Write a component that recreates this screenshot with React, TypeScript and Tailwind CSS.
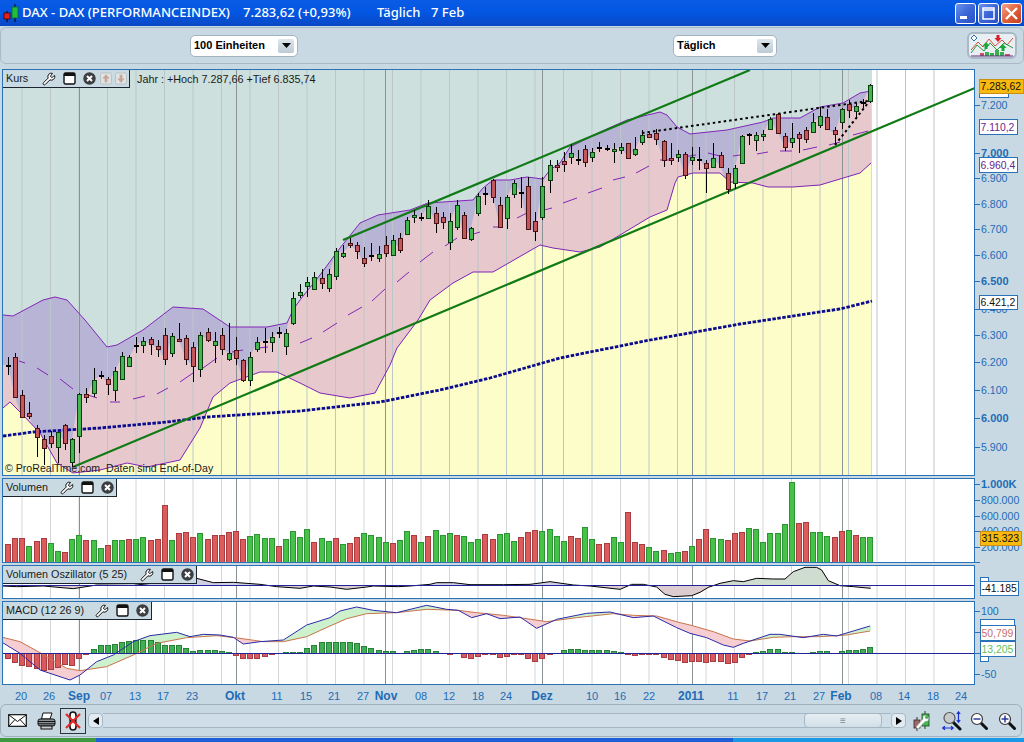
import { Wrench } from 'lucide-react';

type Pt = [number, number];
type Candle = [number, number, number, number, 'g' | 'r' | 'd'];

// high, low, body top, body bottom, kind (all in page pixels)
const candles: Candle[] = [
  [357, 375, 365, 366, 'd'], [353, 398, 357, 397, 'r'], [390, 418, 395, 417, 'r'], [402, 419, 413, 416, 'r'],
  [425, 457, 428, 437, 'r'], [435, 465, 439, 448, 'r'], [431, 448, 436, 443, 'r'], [432, 463, 432, 447, 'g'],
  [424, 450, 425, 443, 'r'], [438, 467, 439, 462, 'g'], [393, 453, 394, 436, 'g'], [388, 403, 394, 397, 'r'],
  [368, 397, 380, 393, 'g'], [371, 379, 375, 376, 'd'], [377, 395, 379, 384, 'r'], [367, 401, 371, 390, 'g'],
  [352, 380, 356, 379, 'g'], [355, 367, 357, 366, 'g'], [337, 353, 345, 346, 'd'], [337, 353, 341, 345, 'g'],
  [337, 355, 339, 344, 'r'], [340, 357, 346, 349, 'r'], [328, 365, 335, 359, 'r'], [333, 357, 336, 353, 'g'],
  [323, 342, 339, 341, 'r'], [335, 365, 338, 359, 'r'], [342, 382, 347, 366, 'r'], [332, 377, 335, 369, 'g'],
  [328, 342, 332, 340, 'r'], [332, 363, 341, 345, 'g'], [328, 355, 335, 349, 'r'], [323, 361, 353, 359, 'g'],
  [337, 365, 350, 358, 'r'], [359, 382, 360, 380, 'r'], [352, 386, 357, 380, 'g'], [337, 352, 342, 349, 'g'],
  [328, 353, 341, 342, 'd'], [332, 352, 337, 342, 'g'], [327, 338, 332, 333, 'd'], [329, 355, 333, 346, 'g'],
  [292, 325, 298, 323, 'g'], [284, 298, 292, 295, 'g'], [277, 297, 282, 286, 'g'], [272, 290, 277, 289, 'g'],
  [269, 289, 278, 283, 'r'], [269, 292, 274, 288, 'g'], [248, 280, 251, 276, 'g'], [245, 258, 253, 256, 'g'],
  [238, 248, 243, 245, 'r'], [242, 259, 245, 251, 'r'], [247, 267, 258, 263, 'r'], [243, 261, 255, 256, 'd'],
  [246, 262, 254, 258, 'g'], [236, 257, 245, 253, 'r'], [235, 256, 240, 255, 'g'], [233, 253, 238, 250, 'r'],
  [217, 235, 220, 234, 'g'], [210, 223, 215, 217, 'g'], [213, 221, 217, 218, 'd'], [200, 219, 206, 218, 'g'],
  [207, 233, 213, 223, 'r'], [212, 229, 217, 222, 'r'], [213, 250, 221, 242, 'g'], [200, 230, 205, 227, 'g'],
  [212, 238, 215, 238, 'r'], [227, 241, 228, 239, 'g'], [193, 216, 196, 213, 'g'], [187, 205, 193, 194, 'd'],
  [179, 203, 180, 197, 'r'], [197, 227, 205, 227, 'r'], [195, 229, 197, 218, 'g'], [180, 198, 183, 194, 'g'],
  [177, 208, 192, 193, 'd'], [177, 229, 186, 229, 'r'], [212, 241, 221, 231, 'r'], [177, 220, 186, 217, 'g'],
  [160, 193, 165, 180, 'g'], [160, 172, 165, 167, 'r'], [152, 172, 161, 164, 'r'], [144, 164, 153, 157, 'g'],
  [150, 165, 159, 160, 'd'], [145, 167, 149, 162, 'r'], [148, 162, 152, 157, 'g'], [142, 152, 147, 148, 'd'],
  [145, 151, 148, 149, 'd'], [143, 163, 149, 151, 'g'], [143, 154, 147, 150, 'g'], [143, 158, 143, 158, 'r'],
  [137, 156, 149, 154, 'g'], [130, 145, 135, 142, 'g'], [133, 138, 134, 137, 'r'], [129, 145, 133, 139, 'r'],
  [140, 167, 141, 160, 'r'], [143, 165, 158, 160, 'r'], [150, 162, 154, 157, 'g'], [152, 179, 154, 175, 'r'],
  [147, 165, 157, 160, 'g'], [147, 170, 159, 160, 'd'], [160, 193, 163, 168, 'r'], [143, 167, 158, 167, 'g'],
  [152, 168, 155, 167, 'r'], [168, 194, 173, 189, 'r'], [165, 189, 168, 183, 'g'], [135, 163, 136, 163, 'g'],
  [133, 145, 134, 135, 'd'], [132, 151, 135, 140, 'g'], [130, 141, 134, 136, 'g'], [117, 129, 119, 129, 'g'],
  [113, 133, 114, 133, 'r'], [133, 151, 136, 147, 'r'], [123, 148, 138, 142, 'g'], [132, 153, 134, 138, 'r'],
  [127, 143, 130, 139, 'r'], [113, 133, 122, 132, 'g'], [107, 128, 116, 125, 'g'], [109, 129, 117, 129, 'r'],
  [127, 144, 130, 134, 'r'], [108, 129, 109, 122, 'g'], [100, 118, 104, 110, 'r'], [103, 118, 106, 111, 'g'],
  [99, 108, 102, 103, 'd'], [84, 103, 85, 101, 'g'],
];

const volTops = [
  544, 538, 538, 546, 541, 538, 543, 551, 552, 539, 535, 540, 540, 548, 545, 540, 540, 539, 539, 537, 540, 539, 505, 540, 533, 532, 537, 533, 539, 535, 535,
  532, 531, 539, 536, 534, 538, 538, 546, 539, 531, 537, 529, 542, 538, 541, 538, 544, 543, 537, 533, 535, 537, 542, 543, 540, 531, 535, 542, 536, 530, 535,
  533, 535, 536, 542, 539, 534, 539, 534, 533, 541, 537, 532, 530, 531, 529, 536, 541, 536, 538, 527, 539, 544, 543, 537, 542, 512, 542, 544, 547, 551, 550,
  553, 552, 551, 546, 539, 529, 538, 539, 540, 533, 532, 528, 529, 542, 533, 533, 524, 482, 523, 522, 532, 532, 536, 537, 531, 530, 535, 537, 537,
];
const volColors =
  'rrrgrrggrggrggrggrggrrrgrrrgrrrrrrggggrggggrgg' +
  'rgrrggggrggrgrgggrgggrrgggrrrggggrrggrrggrrrggrggrgrrggrrrgggggggrrgggrrgrggg';

// bar height from the zero line, positive goes below
const macdHist = [
  5, 9, 12, 13, 15, 17, 16, 14, 11, 12, 5, 1, -4, -8, -8, -9, -11, -12, -13, -13, -13, -11, -8, -8, -8, -5, -2, -3, -3, -3, -2, -1, 2, 5, 5, 5, 3, 1, 0, -1, -1, -1, -5, -8, -11, -11,
  -11, -11, -11, -10, -7, -5, -3, -2, -2, 0, -2, -3, -4, -4, -2, 0, 1, 0, 4, 5, 3, 1, 1, 4, 3, 1, 1, 5, 8, 5, 1, 0, -3, -4, -4, -3, -3, -3, -3, -2, -1, 1, 2, 1, 1, 1, 4, 6, 7, 9, 8, 8,
  9, 8, 8, 10, 9, 4, 1, -1, -2, -4, -4, -1, -1, 0, 0, -1, -2, -2, 0, -2, -3, -3, -4, -6,
];

const upper: Pt[] = [
  [3, 315], [13, 316], [28, 308], [43, 300], [55, 297], [67, 300], [85, 320], [107, 347], [117, 345], [143, 330], [173, 307], [203, 309], [230, 327], [267, 327], [287, 323],
  [293, 310], [300, 300], [320, 275], [340, 248], [360, 223], [378, 215], [410, 210], [428, 203], [473, 200], [483, 188], [493, 180], [510, 180], [527, 177], [543, 179], [550, 170],
  [560, 163], [570, 147], [600, 132], [627, 120], [660, 112], [667, 115], [677, 127], [690, 134], [727, 130], [763, 122], [773, 118], [800, 118], [820, 107], [843, 103], [860, 93], [871, 91],
];
const lower: Pt[] = [
  [3, 408], [10, 402], [23, 415], [40, 433], [57, 463], [73, 473], [100, 470], [127, 463], [147, 467], [180, 460], [200, 428], [213, 397], [230, 383], [260, 372], [277, 372], [300, 383],
  [320, 393], [350, 398], [375, 393], [390, 365], [397, 348], [418, 320], [430, 300], [453, 283], [473, 272], [493, 272], [540, 245], [553, 248], [580, 252], [600, 247], [625, 232], [650, 217],
  [667, 210], [675, 183], [678, 177], [693, 173], [720, 173], [730, 182], [753, 183], [768, 187], [793, 187], [820, 185], [860, 173], [871, 163],
];
const midDashes: [number, number, number, number][] = [
  [19, 361, 25, 363], [37, 368, 48, 375], [60, 379, 73, 389], [88, 395, 97, 398], [110, 402, 120, 402], [133, 399, 145, 396], [157, 394, 168, 388], [180, 382, 193, 373], [203, 368, 217, 358],
  [232, 352, 243, 350], [258, 348, 268, 347], [300, 343, 312, 338], [323, 332, 337, 323], [348, 315, 362, 307], [372, 301, 385, 289], [397, 282, 409, 272], [420, 262, 433, 252], [445, 246, 457, 238],
  [470, 235, 480, 232], [493, 227, 502, 227], [517, 218, 527, 213], [540, 211, 552, 208], [563, 203, 577, 198], [588, 193, 602, 188], [613, 180, 625, 177], [636, 173, 649, 166], [660, 160, 672, 160],
  [683, 157, 696, 155], [708, 153, 720, 156], [733, 156, 740, 155], [757, 154, 768, 152], [780, 151, 792, 151], [803, 150, 817, 147], [829, 145, 840, 142], [853, 135, 868, 131],
];
const ma200: Pt[] = [[3, 436], [33, 432], [100, 428], [167, 422], [207, 417], [300, 411], [380, 402], [440, 390], [490, 378], [560, 358], [650, 340], [740, 324], [800, 315], [840, 309], [872, 301]];

const zoomA = (p: Pt[]): Pt[] => p.map(([x, y]) => [x / 3, 460 + y / 3]);
const zoomB = (p: Pt[]): Pt[] => p.map(([x, y]) => [330 + x / 3, 476 + y / 3]);
const zoomC = (p: Pt[]): Pt[] => p.map(([x, y]) => [680 + x / 3, 460 + y / 3]);

const osc: Pt[] = [
  ...zoomA([[8, 378], [50, 380], [130, 378], [220, 386], [290, 375], [400, 376], [590, 355], [640, 368], [700, 367], [780, 373], [830, 380], [900, 385], [940, 378]]),
  ...zoomB([[0, 333], [50, 340], [110, 333], [130, 330], [205, 332], [240, 330], [300, 325], [320, 320], [370, 320], [420, 326], [520, 326], [600, 325], [660, 317], [730, 327], [780, 330], [870, 340], [905, 325], [940, 325], [980, 333], [1005, 355], [1030, 362]]),
  ...zoomC([[35, 407], [60, 397], [85, 382], [120, 370], [160, 362], [190, 365], [230, 355], [280, 357], [315, 357], [340, 335], [375, 322], [410, 322], [425, 330], [445, 362], [480, 377], [520, 380], [572, 385]]),
];
const macdLine: Pt[] = [
  ...zoomA([[8, 548], [60, 580], [120, 630], [210, 660], [240, 645], [290, 605], [340, 585], [400, 545], [450, 527], [530, 517], [570, 530], [610, 523], [660, 525], [700, 532], [730, 552], [780, 545], [850, 540], [920, 495]]),
  ...zoomB([[0, 425], [30, 405], [80, 393], [130, 403], [200, 410], [290, 388], [350, 400], [385, 403], [425, 425], [470, 413], [510, 428], [570, 423], [620, 457], [680, 430], [770, 412], [840, 408], [910, 425], [970, 420], [1040, 455]]),
  ...zoomC([[30, 520], [80, 533], [130, 555], [160, 562], [190, 550], [270, 523], [300, 523], [370, 533], [430, 523], [470, 528], [570, 498]]),
];
const macdSignal: Pt[] = [
  ...zoomA([[8, 532], [60, 545], [120, 578], [200, 625], [240, 632], [320, 620], [400, 585], [470, 550], [560, 533], [650, 527], [720, 535], [790, 545], [850, 545], [920, 530]]),
  ...zoomB([[0, 450], [50, 428], [110, 413], [200, 410], [290, 400], [385, 403], [440, 410], [520, 418], [570, 425], [650, 437], [740, 425], [850, 413], [910, 418], [980, 420], [1050, 440]]),
  ...zoomC([[30, 495], [100, 515], [160, 537], [210, 543], [280, 532], [340, 530], [420, 530], [500, 525], [570, 513]]),
];

const cx = (i: number) => Math.round(8 + 7.125 * i);
const pts = (p: Pt[]) => p.map(([x, y]) => `${x},${y}`).join(' ');

const at = (p: Pt[], x: number) => {
  for (let i = 1; i < p.length; i++) {
    if (x <= p[i][0]) {
      const [x0, y0] = p[i - 1];
      const [x1, y1] = p[i];
      return y0 + ((y1 - y0) * (x - x0)) / (x1 - x0);
    }
  }
  return p[p.length - 1][1];
};

const closes: Pt[] = candles.map((c, i) => [cx(i), c[4] === 'r' ? c[3] : c[2]]);

const gridLines = Array.from({ length: 33 }, (_, k) => 22 + 28.5 * k);
const monthLines = [79, 236, 385, 542, 692, 842];

function Grid({ top, bottom, light }: { top: number; bottom: number; light: string }) {
  return (
    <>
      {gridLines.map((x) => (
        <line key={x} x1={x} x2={x} y1={top} y2={bottom} stroke={light} strokeWidth="1" />
      ))}
      {monthLines.map((x) => (
        <line key={x} x1={x + 0.5} x2={x + 0.5} y1={top} y2={bottom} stroke="#8b9296" strokeWidth="1" />
      ))}
    </>
  );
}

function PriceChart() {
  const band = [...upper, ...[...lower].reverse()];
  return (
    <svg viewBox="3 70 971 405" className="block h-full w-full">
      <defs>
        <clipPath id="band-clip">
          <polygon points={pts(band)} />
        </clipPath>
      </defs>
      <rect x="3" y="70" width="971" height="405" fill="#ffffff" />
      <rect x="3" y="70" width="869" height="405" fill="#cde0de" />
      <polygon points={pts([...lower, [871, 475], [3, 475]])} fill="#fdfdc9" />
      <polygon points={pts(band)} fill="#b8b4d6" />
      <polygon clipPath="url(#band-clip)" points={pts([[3, 365], ...closes, [871, 85], [871, 480], [3, 480]])} fill="#e7c9cd" />
      <Grid top={70} bottom={475} light="#bcc6c8" />
      <polyline points={pts(upper)} fill="none" stroke="#8126b8" strokeWidth="1" />
      <polyline points={pts(lower)} fill="none" stroke="#8126b8" strokeWidth="1" />
      {midDashes.map(([a, b, c, d]) => (
        <line key={a} x1={a} y1={b} x2={c} y2={d} stroke="#8126b8" strokeWidth="1" />
      ))}
      <polyline points={pts(ma200)} fill="none" stroke="#0b0b8f" strokeWidth="2.8" strokeDasharray="3.5 1.5" />
      <line x1="73" y1="467" x2="975" y2="88" stroke="#107a14" strokeWidth="2.2" />
      <line x1="343" y1="240" x2="750" y2="70" stroke="#107a14" strokeWidth="2.2" />
      <line x1="642" y1="133" x2="868" y2="101" stroke="#000" strokeWidth="2" strokeDasharray="2.5 3" />
      <line x1="835" y1="145" x2="868" y2="103" stroke="#000" strokeWidth="2" strokeDasharray="2.5 3" />
      {candles.map(([h, l, t, b, kind], i) => {
        const x = cx(i);
        return (
          <g key={i}>
            <line x1={x + 0.5} x2={x + 0.5} y1={h} y2={l} stroke="#000" strokeWidth="1" />
            {kind === 'd' ? (
              <rect x={x - 2} y={t} width="5" height="2" fill="#000" />
            ) : (
              <rect
                x={x - 1.5}
                y={t + 0.5}
                width="4"
                height={Math.max(b - t, 2)}
                fill={kind === 'g' ? '#45b552' : '#c2575c'}
                stroke={kind === 'g' ? '#0c3d10' : '#4a1214'}
                strokeWidth="1"
              />
            )}
          </g>
        );
      })}
    </svg>
  );
}

function VolumeChart() {
  return (
    <svg viewBox="3 479 971 83" className="block h-full w-full">
      <rect x="3" y="479" width="971" height="83" fill="#ffffff" />
      <Grid top={479} bottom={562} light="#d4d6d8" />
      {volTops.map((t, i) => (
        <rect
          key={i}
          x={cx(i) - 2.5}
          y={t + 0.5}
          width="5"
          height={562 - t}
          fill={volColors[i] === 'g' ? '#46c246' : '#dc5c5c'}
          stroke={volColors[i] === 'g' ? '#2d9436' : '#a83c40'}
          strokeWidth="1"
        />
      ))}
    </svg>
  );
}

function OscChart() {
  const zero = 585.5;
  const cols = Array.from({ length: 868 }, (_, k) => k + 3);
  return (
    <svg viewBox="3 566 971 32" className="block h-full w-full">
      <rect x="3" y="566" width="971" height="32" fill="#ffffff" />
      <Grid top={566} bottom={598} light="#d4d6d8" />
      {cols.map((x) => {
        const y = at(osc, x);
        return (
          <rect
            key={x}
            x={x}
            y={Math.min(y, zero)}
            width="1"
            height={Math.abs(y - zero)}
            fill={y < zero ? (x > 700 ? '#cfdcd0' : '#cfcfe6') : '#dcccd0'}
          />
        );
      })}
      <polyline points={pts(osc)} fill="none" stroke="#000" strokeWidth="1" />
      <line x1="3" x2="974" y1={zero} y2={zero} stroke="#23239a" strokeWidth="1" />
    </svg>
  );
}

function MacdChart() {
  const zero = 653.5;
  const cols = Array.from({ length: 868 }, (_, k) => k + 3);
  return (
    <svg viewBox="3 602 971 82" className="block h-full w-full">
      <rect x="3" y="602" width="971" height="82" fill="#ffffff" />
      <Grid top={602} bottom={684} light="#d4d6d8" />
      {cols.map((x) => {
        const a = at(macdLine, x);
        const b = at(macdSignal, x);
        return <rect key={x} x={x} y={Math.min(a, b)} width="1" height={Math.abs(a - b)} fill={a < b ? '#cdf0cd' : '#f6cdd0'} />;
      })}
      {macdHist.map((v, i) =>
        v === 0 ? null : (
          <rect
            key={i}
            x={cx(i) - 2.5}
            y={v < 0 ? zero + v : zero}
            width="5"
            height={Math.abs(v)}
            fill={v < 0 ? '#42ad52' : '#d95a5e'}
            stroke={v < 0 ? '#268238' : '#a83c40'}
            strokeWidth="1"
          />
        ),
      )}
      <polyline points={pts(macdSignal)} fill="none" stroke="#c8764e" strokeWidth="1" />
      <polyline points={pts(macdLine)} fill="none" stroke="#2a2aa8" strokeWidth="1" />
      <line x1="3" x2="974" y1={zero} y2={zero} stroke="#23239a" strokeWidth="1" />
    </svg>
  );
}

function Tag({ x, y, w, h, text, color = '#101010', fill = '#ffffff', stroke = '#2a72b8' }: { x: number; y: number; w: number; h: number; text: string; color?: string; fill?: string; stroke?: string }) {
  return (
    <g>
      <rect x={x + 0.5} y={y + 0.5} width={w} height={h} fill={fill} stroke={stroke} strokeWidth="1" />
      <text x={x + 1.5} y={y + h - 3} fontSize="10.4" fill={color}>
        {text}
      </text>
    </g>
  );
}

function AxisLabels({ items }: { items: [number, string, boolean?][] }) {
  return (
    <>
      {items.map(([y, label, bold]) => (
        <g key={y}>
          <line x1="975" x2="980" y1={y + 0.5} y2={y + 0.5} stroke="#2a72b8" strokeWidth="1" />
          <text x="981" y={y + 4} fontSize={bold ? 11 : 10.6} fontWeight={bold ? 700 : 400} fill="#1f6cb4">
            {label}
          </text>
        </g>
      ))}
    </>
  );
}

function PriceAxis() {
  return (
    <svg viewBox="975 69 49 407" className="block h-full w-full">
      <AxisLabels
        items={[
          [105, '7.200'], [153, '7.000', true], [178, '6.900'], [204, '6.800'], [229, '6.700'], [255, '6.600'], [281, '6.500', true],
          [309, '6.400'], [335, '6.300'], [362, '6.200'], [390, '6.100'], [418, '6.000', true], [447, '5.900'],
        ]}
      />
      <rect x="979.5" y="88.5" width="29" height="9" fill="#fff" stroke="#2a72b8" />
      <Tag x={979} y={79} w={44} h={14} text="7.283,62" fill="#f9b90f" stroke="#c88f10" />
      <Tag x={979} y={119} w={38} h={15} text="7.110,2" color="#6b1f8c" />
      <Tag x={979} y={157} w={38} h={15} text="6.960,4" color="#6b1f8c" />
      <Tag x={979} y={295} w={38} h={14} text="6.421,2" />
    </svg>
  );
}

function VolumeAxis() {
  return (
    <svg viewBox="975 478 49 85" className="block h-full w-full">
      <AxisLabels items={[[484, '1.000K', true], [500, '800.000'], [516, '600.000'], [531, '400.000'], [547, '200.000'], [562, '']]} />
      <Tag x={980} y={531} w={41} h={14} text="315.323" fill="#f9b90f" stroke="#c88f10" />
    </svg>
  );
}

function OscAxis() {
  return (
    <svg viewBox="975 565 49 34" className="block h-full w-full">
      <rect x="980.5" y="577.5" width="8" height="6" fill="#fff" stroke="#2a72b8" />
      <Tag x={980} y={581} w={38} h={14} text="-41.185" />
    </svg>
  );
}

function MacdAxis() {
  return (
    <svg viewBox="975 601 49 84" className="block h-full w-full">
      <AxisLabels items={[[611, '100'], [632, ''], [653, ''], [674, '-50']]} />
      <rect x="980.5" y="619.5" width="34" height="8" fill="#fff" stroke="#2a72b8" />
      <rect x="980.5" y="655.5" width="8" height="6" fill="#fff" stroke="#2a72b8" />
      <Tag x={980} y={625} w={35} h={15} text="50,799" color="#c96e6e" />
      <Tag x={980} y={641} w={35} h={15} text="13,205" color="#5fbf5f" />
    </svg>
  );
}

const dayLabels: [number, string, boolean?][] = [
  [21, '20'], [49, '26'], [79, 'Sep', true], [106, '07'], [135, '13'], [163, '17'], [192, '23'], [235, 'Okt', true], [277, '11'], [306, '15'], [334, '21'], [363, '27'], [386, 'Nov', true],
  [421, '08'], [449, '12'], [478, '18'], [506, '24'], [542, 'Dez', true], [592, '10'], [620, '16'], [649, '22'], [691, '2011', true], [733, '11'], [762, '17'], [790, '21'], [819, '27'],
  [841, 'Feb', true], [876, '08'], [904, '14'], [933, '18'], [961, '24'],
];

function DateAxis() {
  return (
    <svg viewBox="0 685 1024 19" className="block h-[19px] w-full">
      {dayLabels.map(([x, label, bold]) => (
        <text key={`${label}${x}`} x={x} y={700} textAnchor="middle" fontSize={bold ? 12 : 11} fontWeight={bold ? 700 : 400} fill="#1f6cb4">
          {label}
        </text>
      ))}
    </svg>
  );
}

function WindowIcon() {
  return (
    <svg width="13" height="13" viewBox="0 0 13 13" className="shrink-0">
      <rect x="1" y="1" width="11" height="11" rx="1.5" fill="#fff" stroke="#111" strokeWidth="1.4" />
      <rect x="1" y="1" width="11" height="3" fill="#111" />
    </svg>
  );
}

function CloseIcon() {
  return (
    <svg width="13" height="13" viewBox="0 0 13 13" className="shrink-0">
      <circle cx="6.5" cy="6.5" r="6.2" fill="#3c3e42" />
      <path d="M4 4 L9 9 M9 4 L4 9" stroke="#fff" strokeWidth="2" />
    </svg>
  );
}

function FadedArrow({ down }: { down?: boolean }) {
  return (
    <svg width="12" height="13" viewBox="0 0 13 13" className="shrink-0">
      <rect x="0.5" y="0.5" width="12" height="12" rx="1.5" fill="#dfe3e4" stroke="#b8bfc2" />
      <path d={down ? 'M6.5 11 L2.5 6.5 H5 V2.5 H8 V6.5 H10.5 Z' : 'M6.5 2 L2.5 6.5 H5 V10.5 H8 V6.5 H10.5 Z'} fill="#c9a595" />
    </svg>
  );
}

function Legend({ label, textW, arrows }: { label: string; textW: number; arrows?: boolean }) {
  return (
    <div className="absolute left-0 top-0 flex h-[18px] items-center gap-[7px] border-b border-r border-[#1c2430] bg-[#c9dae3] pl-[3px] pr-[2px] text-[10.8px] text-[#1a1a1a]">
      <span className="whitespace-nowrap" style={{ width: textW }}>
        {label}
      </span>
      <Wrench size={14} strokeWidth={1.6} className="shrink-0 text-black" fill="#fff" />
      <WindowIcon />
      <CloseIcon />
      {arrows && (
        <div className="-ml-[3px] flex gap-[3px]">
          <FadedArrow />
          <FadedArrow down />
        </div>
      )}
    </div>
  );
}

function Select({ label, width }: { label: string; width: string }) {
  return (
    <div className={`flex h-[22px] items-center justify-between rounded-[5px] border border-[#a3b3bf] bg-white pl-[3px] pr-[3px] text-[11px] font-bold text-black ${width}`}>
      <span>{label}</span>
      <span className="flex h-[14px] w-[16px] items-center justify-center rounded-[2px] bg-gradient-to-b from-[#dde6ec] to-[#bccbd6]">
        <svg width="9" height="5" viewBox="0 0 9 5">
          <path d="M0 0 H9 L4.5 5 Z" fill="#000" />
        </svg>
      </span>
    </div>
  );
}

function IndicatorButton() {
  return (
    <div className="h-[27px] w-[50px] rounded-[6px] border-2 border-[#a8b8c4] bg-[#e8eff3]">
      <svg viewBox="0 0 46 23" className="block h-full w-full">
        <path d="M2 16 L9 8 L14 13 L20 5 L26 12 L33 6 L38 11 L44 4" fill="none" stroke="#d84b3a" strokeWidth="1" />
        <path d="M2 19 L8 11 L15 17 L21 9 L28 16 L35 9 L44 14" fill="none" stroke="#2c9a3c" strokeWidth="1" />
        <path d="M5 1 L8 4 L5 7 L2 4 Z" fill="#fff" stroke="#2a72b8" />
        <path d="M17 8 L20.5 12 H18.5 V15 H15.5 V12 H13.5 Z" fill="#17a83a" />
        <path d="M29 8 L25.5 4 H27.5 V1 H30.5 V4 H32.5 Z" fill="#d8202a" />
        <path d="M34 10 L37.5 14 H35.5 V17 H32.5 V14 H30.5 Z" fill="#17a83a" />
        <rect x="11" y="19" width="4" height="3" fill="#c8506a" />
        <rect x="16" y="18" width="4" height="4" fill="#3cae50" />
        <rect x="21" y="19" width="4" height="3" fill="#3cae50" />
        <rect x="26" y="16" width="4" height="6" fill="#3cae50" />
        <rect x="31" y="18" width="4" height="4" fill="#3cae50" />
        <rect x="36" y="20" width="5" height="2" fill="#c8506a" />
        <line x1="2" x2="44" y1="22" y2="22" stroke="#5a2a7a" />
      </svg>
    </div>
  );
}

function AppGlyph() {
  return (
    <svg width="18" height="20" viewBox="0 0 18 20" className="shrink-0">
      <line x1="5" x2="5" y1="8" y2="19" stroke="#000" />
      <rect x="2" y="10" width="6" height="6" fill="#e8201c" stroke="#400" strokeWidth="0.8" />
      <line x1="13" x2="13" y1="1" y2="19" stroke="#000" />
      <rect x="10" y="4" width="6" height="11" fill="#22c03a" stroke="#063" strokeWidth="0.8" />
    </svg>
  );
}

function WinButton({ kind }: { kind: 'min' | 'max' | 'close' }) {
  const bg = kind === 'close' ? 'from-[#f2a48c] via-[#e2603a] to-[#c23c1e]' : 'from-[#6c92ec] via-[#3c66d8] to-[#2a50c8]';
  return (
    <div className={`flex h-[21px] w-[21px] items-center justify-center rounded-[3px] border border-white bg-gradient-to-br ${bg}`}>
      <svg width="15" height="15" viewBox="0 0 15 15">
        {kind === 'min' && <rect x="2" y="10" width="7" height="3" fill="#fff" />}
        {kind === 'max' && <path d="M2 2 H13 V13 H2 Z M2 4 H13" fill="none" stroke="#fff" strokeWidth="1.5" />}
        {kind === 'close' && <path d="M2 2 L13 13 M13 2 L2 13" stroke="#fff" strokeWidth="2.4" />}
      </svg>
    </div>
  );
}

function MailIcon() {
  return (
    <svg width="19" height="13" viewBox="0 0 19 13" className="shrink-0">
      <rect x="0.7" y="0.7" width="17.6" height="11.6" fill="#fff" stroke="#111" strokeWidth="1.2" />
      <path d="M1 1 L9.5 7.5 L18 1 M1 12 L7 5.5 M18 12 L12 5.5" fill="none" stroke="#111" strokeWidth="1" />
    </svg>
  );
}

function PrinterIcon() {
  return (
    <svg width="19" height="18" viewBox="0 0 19 18" className="shrink-0">
      <path d="M6 1 H15 L13 7 H4.5 Z" fill="#fff" stroke="#111" />
      <rect x="1" y="7" width="17" height="7" rx="2" fill="#8e9496" stroke="#111" />
      <path d="M1 9.5 H18 M1 11.8 H18" stroke="#111" strokeWidth="1" />
      <rect x="4" y="14" width="11" height="3" fill="#c8ccd0" stroke="#111" />
    </svg>
  );
}

function NoLinkIcon() {
  return (
    <div className="flex h-[26px] w-[26px] shrink-0 items-center justify-center border border-[#2c343c] bg-[#cbd9e2]">
      <svg width="18" height="20" viewBox="0 0 18 20">
        <rect x="6" y="1" width="6" height="10" rx="3" fill="#fff" stroke="#111" strokeWidth="1.6" />
        <rect x="6" y="9" width="6" height="10" rx="3" fill="#fff" stroke="#111" strokeWidth="1.6" />
        <path d="M2 3 L16 17 M16 3 L2 17" stroke="#e22a2a" strokeWidth="2.2" />
      </svg>
    </div>
  );
}

function ScrollButton({ right }: { right?: boolean }) {
  return (
    <div className="flex h-[15px] w-[15px] shrink-0 items-center justify-center rounded-[4px] border border-[#a6b6c2] bg-[#e2ebf1]">
      <svg width="6" height="8" viewBox="0 0 6 8">
        <path d={right ? 'M0 0 L6 4 L0 8 Z' : 'M6 0 L0 4 L6 8 Z'} fill="#000" />
      </svg>
    </div>
  );
}

function CandleWrenchIcon() {
  return (
    <svg width="17" height="20" viewBox="0 0 17 20" className="shrink-0">
      <line x1="4" x2="4" y1="6" y2="20" stroke="#3a2a2a" />
      <rect x="1" y="9" width="6" height="8" fill="#9a6a6c" stroke="#3a2a2a" strokeWidth="0.8" />
      <line x1="12" x2="12" y1="0" y2="18" stroke="#1a4a1a" />
      <rect x="9" y="3" width="7" height="12" fill="#45b552" stroke="#1a4a1a" strokeWidth="0.8" />
      <path d="M3 16 L10 8 L10 5 L13 4 L12 7 L14 8 L16 6 L15 10 L12 10.5 L5 18 Z" fill="#fff" stroke="#999" strokeWidth="0.5" />
    </svg>
  );
}

function MagIcon({ sign }: { sign?: 'plus' | 'minus' }) {
  return (
    <svg width="18" height="18" viewBox="0 0 18 18" className="shrink-0">
      <path d="M11 11 L16.5 16.5" stroke="#111" strokeWidth="3" strokeLinecap="round" />
      <circle cx="7" cy="7" r="5.5" fill="#fff" stroke="#3a3a3a" strokeWidth="1.2" />
      <path d="M3.5 7 H10.5" stroke="#1a2f9a" strokeWidth="1.4" />
      {sign === 'plus' && <path d="M7 3.5 V10.5" stroke="#1a2f9a" strokeWidth="1.4" />}
    </svg>
  );
}

function FitIcon() {
  return (
    <svg width="20" height="20" viewBox="0 0 20 20" className="shrink-0">
      <path d="M11 11 L18 18" stroke="#111" strokeWidth="3" strokeLinecap="round" />
      <circle cx="7.5" cy="7" r="5.5" fill="#c6cacc" stroke="#555" strokeWidth="1.2" />
      <path d="M16.5 1 V11 M14.8 3 L16.5 0.8 L18.2 3 M14.8 9 L16.5 11.2 L18.2 9" fill="none" stroke="#1a2fd0" strokeWidth="1.2" />
      <path d="M1 17 H11 M3 15.3 L0.8 17 L3 18.7 M9 15.3 L11.2 17 L9 18.7" fill="none" stroke="#1a2fd0" strokeWidth="1.2" />
    </svg>
  );
}

export default function App() {
  return (
    <div className="flex h-[742px] w-[1024px] flex-col overflow-hidden bg-[#c8d9e4] font-['Liberation_Sans',sans-serif]">
      {/* Title bar */}
      <div className="flex h-[26px] shrink-0 items-center bg-gradient-to-b from-[#0a5ce6] via-[#0356e2] to-[#0a48c4] pl-[2px] pr-[2px] font-['Noto_Sans',sans-serif] text-[13px] font-medium text-white">
        <AppGlyph />
        <span className="ml-[2px] w-[221px] whitespace-nowrap">DAX - DAX (PERFORMANCEINDEX)</span>
        <span className="w-[134px] whitespace-nowrap">7.283,62 (+0,93%)</span>
        <span className="w-[54px] whitespace-nowrap">Täglich</span>
        <span className="whitespace-nowrap">7 Feb</span>
        <div className="ml-auto flex items-center gap-[2px]">
          <WinButton kind="min" />
          <WinButton kind="max" />
          <WinButton kind="close" />
        </div>
      </div>

      {/* Selector strip */}
      <div className="h-[43px] shrink-0 pt-[1px]">
        <div className="flex h-[37px] items-center rounded-[6px] border border-[#a9b9c5] pl-[189px]">
          <Select label="100 Einheiten" width="w-[108px]" />
          <div className="ml-[375px]">
            <Select label="Täglich" width="w-[104px]" />
          </div>
          <div className="ml-[190px]">
            <IndicatorButton />
          </div>
        </div>
      </div>

      {/* Price */}
      <div className="flex h-[407px] shrink-0 pl-[2px]">
        <div className="relative h-full w-[973px] border border-[#2a72b8]">
          <PriceChart />
          <Legend label="Kurs" textW={29} arrows />
          <span className="absolute left-[134px] top-[1px] whitespace-nowrap text-[10.8px] text-[#1a1a1a]">Jahr : +Hoch 7.287,66 +Tief 6.835,74</span>
          <span className="absolute bottom-[1px] left-[2px] whitespace-pre text-[10.6px] leading-none text-[#1a1a1a]">© ProRealTime.com  Daten sind End-of-Day</span>
        </div>
        <div className="w-[49px]">
          <PriceAxis />
        </div>
      </div>

      {/* Volume */}
      <div className="mt-[2px] flex h-[85px] shrink-0 pl-[2px]">
        <div className="relative h-full w-[973px] border border-[#2a72b8]">
          <VolumeChart />
          <Legend label="Volumen" textW={47} />
        </div>
        <div className="w-[49px]">
          <VolumeAxis />
        </div>
      </div>

      {/* Volume oscillator */}
      <div className="mt-[2px] flex h-[34px] shrink-0 pl-[2px]">
        <div className="relative h-full w-[973px] border border-[#2a72b8]">
          <OscChart />
          <Legend label="Volumen Oszillator (5 25)" textW={127} />
        </div>
        <div className="w-[49px]">
          <OscAxis />
        </div>
      </div>

      {/* MACD */}
      <div className="mt-[2px] flex h-[84px] shrink-0 pl-[2px]">
        <div className="relative h-full w-[973px] border border-[#2a72b8]">
          <MacdChart />
          <Legend label="MACD (12 26 9)" textW={82} />
        </div>
        <div className="w-[49px]">
          <MacdAxis />
        </div>
      </div>

      <DateAxis />

      {/* Bottom tools */}
      <div className="mr-[2px] flex h-[33px] shrink-0 items-center rounded-[6px] border border-[#a0b1bd] pl-[7px]">
        <MailIcon />
        <div className="ml-[10px]">
          <PrinterIcon />
        </div>
        <div className="ml-[4px]">
          <NoLinkIcon />
        </div>
        <div className="ml-[2px] flex w-[818px] items-center">
          <ScrollButton />
          <div className="flex h-[15px] w-[788px] items-center justify-end border-y border-[#a6b6c2] bg-[#cfdee8] pr-[9px]">
            <div className="flex h-[15px] w-[78px] items-center justify-center rounded-[4px] border border-[#a6b6c2] bg-gradient-to-b from-[#e6eef3] to-[#d2dfe8] text-[10px] leading-none text-[#7e8e9a]">
              ≡
            </div>
          </div>
          <ScrollButton right />
        </div>
        <div className="ml-[7px]">
          <CandleWrenchIcon />
        </div>
        <div className="ml-[12px]">
          <FitIcon />
        </div>
        <div className="ml-[8px]">
          <MagIcon sign="minus" />
        </div>
        <div className="ml-[10px]">
          <MagIcon sign="plus" />
        </div>
      </div>

      {/* Taskbar edge */}
      <div className="mt-[1px] flex h-[4px] shrink-0">
        <div className="w-[96px] bg-[#3f9a3f]" />
        <div className="w-[637px] bg-[#1c5fd8]" />
        <div className="flex-1 bg-[#1a9ae6]" />
      </div>
    </div>
  );
}
